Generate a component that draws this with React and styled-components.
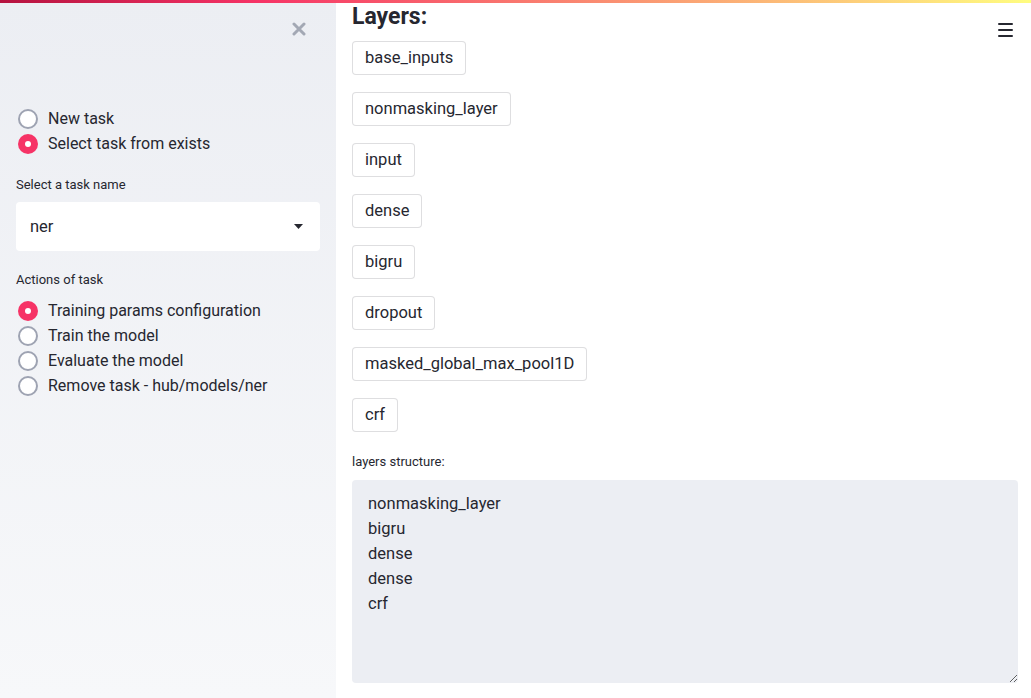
import React from "react";
import styled, { createGlobalStyle } from "styled-components";

const GlobalStyle = createGlobalStyle`
  html, body { margin: 0; padding: 0; }
  body {
    font-family: Roboto, "Noto Sans", sans-serif;
    color: #262730;
    background: #ffffff;
  }
  * { box-sizing: border-box; }
`;

const Page = styled.div`
  position: relative;
  display: flex;
  width: 1031px;
  height: 698px;
  overflow: hidden;
`;

const Decoration = styled.div`
  position: absolute;
  top: 0;
  left: 0;
  right: 0;
  height: 3px;
  background: linear-gradient(90deg, #b5123f, #f63366 25%, #fffd80);
  z-index: 2;
`;

const Sidebar = styled.aside`
  width: 336px;
  flex: none;
  height: 698px;
  background: linear-gradient(180deg, #eceef3 0%, #f7f8fa 100%);
  padding: 16px 16px 0 16px;
  display: flex;
  flex-direction: column;
`;

const CloseRow = styled.div`
  display: flex;
  justify-content: flex-end;
  height: 26px;
  padding-right: 14px;
  align-items: center;
`;

const RadioGroup = styled.div`
  display: flex;
  flex-direction: column;
  margin-top: ${(p) => p.$mt || 0}px;
`;

const RadioRow = styled.label`
  display: flex;
  align-items: center;
  height: 25px;
  font-size: 16px;
  color: #262730;
  gap: 10px;
  padding-left: 2px;
`;

const RadioCircle = styled.span`
  width: 20px;
  height: 20px;
  border-radius: 50%;
  flex: none;
  display: flex;
  align-items: center;
  justify-content: center;
  background: ${(p) => (p.$on ? "#f63366" : "#ffffff")};
  border: ${(p) => (p.$on ? "none" : "2px solid #9ea3b2")};
  &::after {
    content: "";
    display: ${(p) => (p.$on ? "block" : "none")};
    width: 6px;
    height: 6px;
    border-radius: 50%;
    background: #ffffff;
  }
`;

const FieldLabel = styled.div`
  font-size: 13px;
  line-height: 20px;
  color: #262730;
  margin-top: ${(p) => p.$mt || 0}px;
`;

const SelectBox = styled.div`
  margin-top: 7px;
  height: 49px;
  background: #ffffff;
  border-radius: 4px;
  display: flex;
  align-items: center;
  justify-content: space-between;
  padding: 0 17px 0 14px;
  font-size: 16.5px;
`;

const Main = styled.main`
  position: relative;
  flex: 1;
  padding: 4px 13px 0 16px;
  display: flex;
  flex-direction: column;
`;

const Heading = styled.h2`
  margin: 0;
  font-size: 23px;
  line-height: 26px;
  font-weight: 700;
`;

const LayerList = styled.div`
  display: flex;
  flex-direction: column;
  align-items: flex-start;
  gap: 17px;
  margin-top: 11px;
`;

const LayerButton = styled.button`
  font-family: inherit;
  font-size: 16.5px;
  color: #262730;
  background: #ffffff;
  border: 1px solid rgba(49, 51, 63, 0.16);
  border-radius: 4px;
  height: 34px;
  padding: 0 12px;
  line-height: 32px;
`;

const TextArea = styled.textarea`
  margin-top: 8px;
  width: 100%;
  height: 203px;
  background: #eceef3;
  border: none;
  border-radius: 4px;
  font-family: inherit;
  font-size: 16.5px;
  line-height: 25px;
  color: #262730;
  padding: 11px 16px;
  outline: none;
  resize: vertical;
`;

const MenuButton = styled.div`
  position: absolute;
  top: 23px;
  right: 18px;
  width: 15px;
  display: flex;
  flex-direction: column;
  gap: 4px;
  span {
    display: block;
    height: 2px;
    background: #262730;
    border-radius: 1px;
  }
`;

const options1 = [
  { label: "New task", on: false },
  { label: "Select task from exists", on: true },
];
const options2 = [
  { label: "Training params configuration", on: true },
  { label: "Train the model", on: false },
  { label: "Evaluate the model", on: false },
  { label: "Remove task - hub/models/ner", on: false },
];
const layers = [
  "base_inputs",
  "nonmasking_layer",
  "input",
  "dense",
  "bigru",
  "dropout",
  "masked_global_max_pool1D",
  "crf",
];

function Radio({ label, on }) {
  return (
    <RadioRow>
      <RadioCircle $on={on} />
      {label}
    </RadioRow>
  );
}

export default function App() {
  return (
    <>
      <GlobalStyle />
      <Page>
        <Decoration />
        <Sidebar>
          <CloseRow>
            <svg width="14" height="14" viewBox="0 0 14 14">
              <path d="M2 2 L12 12 M12 2 L2 12" stroke="#a3a8b4" strokeWidth="3" strokeLinecap="round" />
            </svg>
          </CloseRow>
          <RadioGroup $mt={64}>
            {options1.map((o) => (
              <Radio key={o.label} {...o} />
            ))}
          </RadioGroup>
          <FieldLabel $mt={19}>Select a task name</FieldLabel>
          <SelectBox>
            <span>ner</span>
            <svg width="9" height="5" viewBox="0 0 9 5">
              <path d="M0 0 H9 L4.5 5 Z" fill="#262730" />
            </svg>
          </SelectBox>
          <FieldLabel $mt={19}>Actions of task</FieldLabel>
          <RadioGroup $mt={8}>
            {options2.map((o) => (
              <Radio key={o.label} {...o} />
            ))}
          </RadioGroup>
        </Sidebar>
        <Main>
          <Heading>Layers:</Heading>
          <LayerList>
            {layers.map((l) => (
              <LayerButton key={l}>{l}</LayerButton>
            ))}
          </LayerList>
          <FieldLabel $mt={20}>layers structure:</FieldLabel>
          <TextArea
            readOnly
            value={"nonmasking_layer\nbigru\ndense\ndense\ncrf"}
          />
          <MenuButton>
            <span />
            <span />
            <span />
          </MenuButton>
        </Main>
      </Page>
    </>
  );
}
